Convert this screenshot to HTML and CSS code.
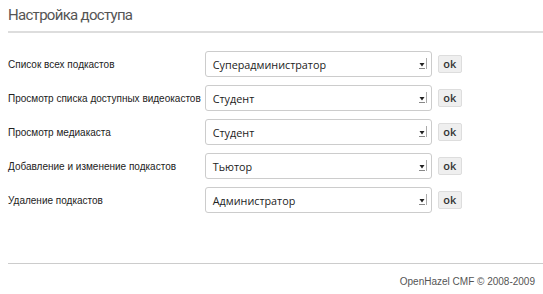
FILE: index.html
```html
<!DOCTYPE html>
<html>
<head>
<meta charset="utf-8">
<link rel="stylesheet" href="styles.css">
</head>
<body>
<div class="page">
  <h1 class="title">Настройка доступа</h1>
  <div class="perms">
    <div class="label">Список всех подкастов</div>
    <div class="select"><span class="val">Суперадминистратор</span><svg class="arrow" width="10" height="14" viewBox="0 0 10 14"><path d="M1.5 6h5l-2.5 3.5z" fill="#222"/><path d="M1 11.5h6" stroke="#888"/><path d="M8.5 1v11" stroke="#aaa"/></svg></div>
    <button class="ok">ok</button>

    <div class="label">Просмотр списка доступных видеокастов</div>
    <div class="select"><span class="val">Студент</span><svg class="arrow" width="10" height="14" viewBox="0 0 10 14"><path d="M1.5 6h5l-2.5 3.5z" fill="#222"/><path d="M1 11.5h6" stroke="#888"/><path d="M8.5 1v11" stroke="#aaa"/></svg></div>
    <button class="ok">ok</button>

    <div class="label">Просмотр медиакаста</div>
    <div class="select"><span class="val">Студент</span><svg class="arrow" width="10" height="14" viewBox="0 0 10 14"><path d="M1.5 6h5l-2.5 3.5z" fill="#222"/><path d="M1 11.5h6" stroke="#888"/><path d="M8.5 1v11" stroke="#aaa"/></svg></div>
    <button class="ok">ok</button>

    <div class="label">Добавление и изменение подкастов</div>
    <div class="select"><span class="val">Тьютор</span><svg class="arrow" width="10" height="14" viewBox="0 0 10 14"><path d="M1.5 6h5l-2.5 3.5z" fill="#222"/><path d="M1 11.5h6" stroke="#888"/><path d="M8.5 1v11" stroke="#aaa"/></svg></div>
    <button class="ok">ok</button>

    <div class="label">Удаление подкастов</div>
    <div class="select"><span class="val">Администратор</span><svg class="arrow" width="10" height="14" viewBox="0 0 10 14"><path d="M1.5 6h5l-2.5 3.5z" fill="#222"/><path d="M1 11.5h6" stroke="#888"/><path d="M8.5 1v11" stroke="#aaa"/></svg></div>
    <button class="ok">ok</button>
  </div>
  <div class="footer">
    <a class="brand" href="#">OpenHazel CMF</a> © 2008-2009
  </div>
</div>
</body>
</html>
```

FILE: styles.css
```css
html, body {
  margin: 0;
  padding: 0;
  background: #fff;
}
.page {
  padding: 6px 0 0 8px;
  font-family: "Liberation Sans", Arial, sans-serif;
  color: #333;
}
.title {
  margin: 0;
  font-family: Roboto, "Liberation Sans", sans-serif;
  font-size: 15px;
  letter-spacing: -0.7px;
  font-weight: normal;
  color: #555;
  line-height: 18px;
  padding-bottom: 7px;
  border-bottom: 2px solid #ddd;
}
.perms {
  display: grid;
  grid-template-columns: auto 227px auto;
  justify-content: start;
  align-items: center;
  row-gap: 8px;
  column-gap: 6px;
  margin-top: 18px;
}
.label {
  font-size: 10px;
  color: #222;
  margin-right: -2px;
}
.select {
  height: 24px;
  border: 1px solid #ccc;
  border-radius: 3px;
  display: flex;
  align-items: center;
  justify-content: space-between;
  padding: 0 3px 0 7px;
  font-family: "Open Sans", "DejaVu Sans", sans-serif;
  font-size: 10.8px;
  color: #222;
  background: #fff;
}
.arrow {
  display: block;
}
.ok {
  height: 18px;
  width: 24px;
  padding: 0;
  border: 1px solid #ddd;
  border-radius: 2px;
  background: #efefef;
  font-family: "Open Sans", "DejaVu Sans", sans-serif;
  font-size: 11px;
  font-weight: 600;
  color: #333;
  line-height: 16px;
}
.footer {
  margin-top: 50px;
  border-top: 1px solid #ccc;
  text-align: right;
  padding: 12px 8px 0 0;
  font-size: 10px;
  color: #555;
}
.brand {
  color: #555;
  text-decoration: none;
  border-bottom: 1px dotted #666;
}
```
